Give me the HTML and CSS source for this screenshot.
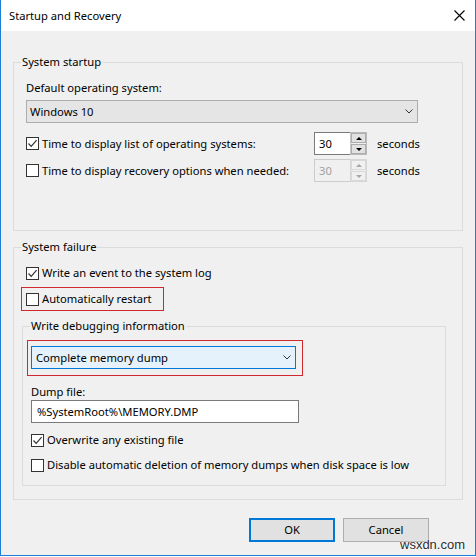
FILE: index.html
```html
<!DOCTYPE html>
<html>
<head>
<meta charset="utf-8">
<title>Startup and Recovery</title>
<link rel="stylesheet" href="styles.css">
</head>
<body>
<div class="window">
  <div class="titlebar">
    <span class="title">Startup and Recovery</span>
    <svg class="close" width="11" height="11" viewBox="0 0 11 11"><path d="M0.5 0.5 L10.5 10.5 M10.5 0.5 L0.5 10.5" stroke="#000" stroke-width="1.1" fill="none"/></svg>
  </div>
  <div class="client">
    <div class="group g-startup">
      <div class="gtitle">System startup</div>
      <div class="gbody">
        <div class="label">Default operating system:</div>
        <div class="select os-select">
          <span class="select-text">Windows 10</span>
          <svg class="chev" width="8" height="5" viewBox="0 0 8 5"><path d="M0.5 0.5 L4 4 L7.5 0.5" stroke="#333" stroke-width="1" fill="none"/></svg>
        </div>
        <div class="spin-row first">
          <div class="check">
            <span class="box"><svg width="11" height="11" viewBox="0 0 11 11"><path d="M1.5 5.5 L4.2 8.3 L9.6 2.2" stroke="#333" stroke-width="1.2" fill="none"/></svg></span>
            <span>Time to display list of operating systems:</span>
          </div>
          <div class="spin">
            <div class="spin-text">30</div>
            <div class="spin-btns">
              <div class="sbtn"><span class="tri up"></span></div>
              <div class="sbtn"><span class="tri down"></span></div>
            </div>
          </div>
          <span class="unit">seconds</span>
        </div>
        <div class="spin-row">
          <div class="check">
            <span class="box"></span>
            <span>Time to display recovery options when needed:</span>
          </div>
          <div class="spin disabled">
            <div class="spin-text">30</div>
            <div class="spin-btns">
              <div class="sbtn"><span class="tri up"></span></div>
              <div class="sbtn"><span class="tri down"></span></div>
            </div>
          </div>
          <span class="unit">seconds</span>
        </div>
      </div>
    </div>

    <div class="group g-failure">
      <div class="gtitle">System failure</div>
      <div class="gbody">
        <div class="check row-log">
          <span class="box"><svg width="11" height="11" viewBox="0 0 11 11"><path d="M1.5 5.5 L4.2 8.3 L9.6 2.2" stroke="#333" stroke-width="1.2" fill="none"/></svg></span>
          <span>Write an event to the system log</span>
        </div>
        <div class="check highlight restart">
          <span class="box"></span>
          <span>Automatically restart</span>
        </div>
        <div class="group inner">
          <div class="gtitle">Write debugging information</div>
          <div class="gbody">
            <div class="highlight dump-wrap">
              <div class="select dump-select">
                <span class="select-text">Complete memory dump</span>
                <svg class="chev" width="8" height="5" viewBox="0 0 8 5"><path d="M0.5 0.5 L4 4 L7.5 0.5" stroke="#333" stroke-width="1" fill="none"/></svg>
              </div>
            </div>
            <div class="label dump-label">Dump file:</div>
            <div class="textbox">%SystemRoot%\MEMORY.DMP</div>
            <div class="check row-over">
              <span class="box"><svg width="11" height="11" viewBox="0 0 11 11"><path d="M1.5 5.5 L4.2 8.3 L9.6 2.2" stroke="#333" stroke-width="1.2" fill="none"/></svg></span>
              <span>Overwrite any existing file</span>
            </div>
            <div class="check row-disable">
              <span class="box"></span>
              <span>Disable automatic deletion of memory dumps when disk space is low</span>
            </div>
          </div>
        </div>
      </div>
    </div>

    <div class="buttons">
      <div class="btn default">OK</div>
      <div class="btn">Cancel</div>
    </div>
  </div>
  <div class="watermark">wsxdn.com</div>
</div>
</body>
</html>
```

FILE: styles.css
```css
* { box-sizing: border-box; }
html, body { margin: 0; padding: 0; background: #ffffff; }
body {
  font-family: "Noto Sans", "Open Sans", sans-serif;
  font-size: 11.2px;
  line-height: 16px;
  color: #000;
}
.window {
  position: relative;
  width: 476px;
  height: 556px;
  border-left: 1px solid #1c7fd6;
  border-right: 1px solid #1c7fd6;
  border-bottom: 1px solid #1c7fd6;
  background: #f0f0f0;
  display: flex;
  flex-direction: column;
}
.titlebar {
  flex: none;
  height: 31px;
  background: #ffffff;
  display: flex;
  align-items: center;
  justify-content: space-between;
  padding: 0 10px 0 8px;
}
.close { display: block; }
.client {
  flex: 1;
  padding: 31px 12px 0 12px;
  display: flex;
  flex-direction: column;
}
.group {
  border: 1px solid #dcdcdc;
}
.gtitle {
  display: block;
  width: fit-content;
  margin: -9px 0 0 7px;
  padding: 0 1px;
  background: #f0f0f0;
  height: 16px;
  white-space: nowrap;
}
.g-startup .gbody { padding: 10px 0 48px 12px; }
.g-failure { margin-top: 16px; }
.g-failure > .gbody { padding: 10px 16px 0 12px; }
.label { height: 16px; }
.select {
  display: flex;
  align-items: center;
  justify-content: space-between;
  height: 23px;
  padding: 0 4px 0 3px;
}
.os-select {
  margin-top: 4px;
  width: 392px;
  background: #e5e5e5;
  border: 1px solid #adadad;
}
.chev { display: block; }
.spin-row {
  display: grid;
  grid-template-columns: 288px 53px auto;
  align-items: center;
  height: 23px;
  margin-top: 4px;
}
.spin-row.first { margin-top: 9px; }
.unit { margin-left: 10px; }
.check {
  display: flex;
  align-items: center;
  gap: 3px;
  height: 16px;
  white-space: nowrap;
}
.box {
  width: 13px;
  height: 13px;
  border: 1px solid #333;
  background: #fff;
  flex: none;
  display: flex;
  align-items: center;
  justify-content: center;
}
.box svg { display: block; }
.spin { display: flex; height: 23px; }
.spin-text {
  width: 36px;
  background: #fff;
  border: 1px solid #7a7a7a;
  border-right: none;
  padding-left: 4px;
  display: flex;
  align-items: center;
}
.spin-btns {
  width: 17px;
  border: 1px solid #b9b9b9;
  border-left: 1px solid #c8c8c8;
  background: #f0f0f0;
  display: flex;
  flex-direction: column;
  gap: 1px;
}
.sbtn {
  flex: 1;
  background: #e1e1e1;
  border: 1px solid #adadad;
  display: flex;
  align-items: center;
  justify-content: center;
}
.tri { width: 0; height: 0; border-left: 3px solid transparent; border-right: 3px solid transparent; }
.tri.up { border-bottom: 3px solid #000; }
.tri.down { border-top: 3px solid #000; }
.spin.disabled .spin-text { background: #f0f0f0; border-color: #cccccc; color: #a0a0a0; }
.spin.disabled .spin-btns { border-color: #d6d6d6; }
.spin.disabled .sbtn { background: #f0f0f0; border-color: #d9d9d9; }
.spin.disabled .tri.up { border-bottom-color: #a6a6a6; }
.spin.disabled .tri.down { border-top-color: #a6a6a6; }
.highlight { border: 1px solid #d0282f; }
.restart {
  margin: 6px 0 0 -5px;
  width: 143px;
  height: 24px;
  padding: 0 0 0 4px;
}
.inner {
  margin: 15px 0 13px -4px;
  width: 424px;
}
.inner .gbody { padding: 6px 0 12px 8px; }
.dump-wrap {
  margin-left: -4px;
  width: 276px;
  padding: 5px 6px 6px 3px;
}
.dump-select {
  width: 265px;
  background: #e5f1fb;
  border: 1px solid #0078d7;
  padding: 0 4px 0 4px;
}
.dump-label { margin-top: 8px; }
.textbox {
  width: 268px;
  height: 23px;
  background: #fff;
  border: 1px solid #7a7a7a;
  padding-left: 5px;
  display: flex;
  align-items: center;
}
.row-over { margin-top: 9px; }
.row-disable { margin-top: 9px; }
.buttons {
  display: flex;
  justify-content: flex-end;
  gap: 8px;
  margin-top: 18px;
  padding-right: 34px;
}
.btn {
  width: 86px;
  height: 24px;
  background: #e1e1e1;
  border: 1px solid #adadad;
  display: flex;
  align-items: center;
  justify-content: center;
}
.btn.default { border: 2px solid #0078d7; }
.watermark {
  position: absolute;
  left: 399px;
  top: 537px;
  font-family: "Liberation Sans", Arial, sans-serif;
  font-size: 13px;
  line-height: 15px;
  color: #2b2b2b;
  text-shadow: 0 0 2px #fff, 0 0 2px #fff;
}
```
